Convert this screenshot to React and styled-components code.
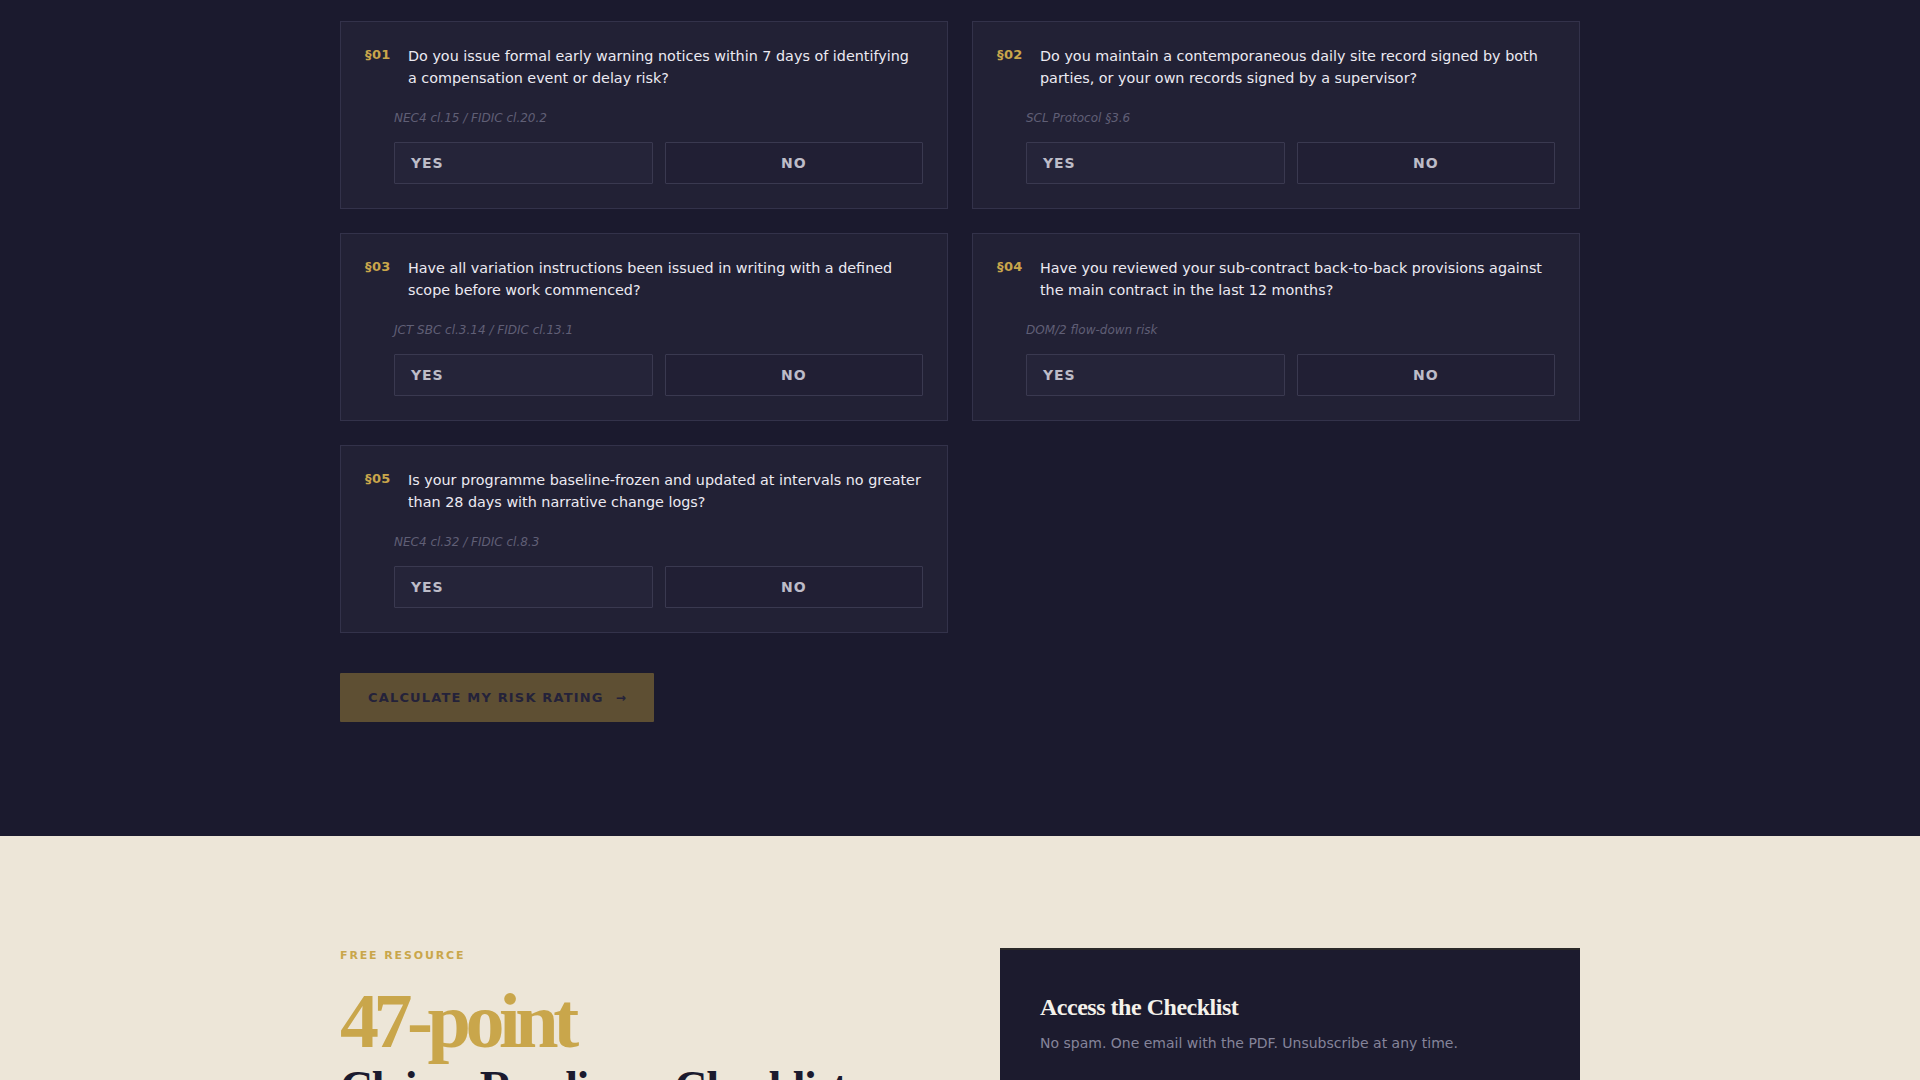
import React from 'react';
import styled, { createGlobalStyle } from 'styled-components';

const GlobalStyle = createGlobalStyle`
  html, body {
    margin: 0;
    padding: 0;
    background: #1b1a2e;
    font-family: "DejaVu Sans", "Noto Sans", sans-serif;
  }
  * {
    box-sizing: border-box;
  }
`;

const questions = [
  {
    id: '01',
    text: 'Do you issue formal early warning notices within 7 days of identifying a compensation event or delay risk?',
    cite: 'NEC4 cl.15 / FIDIC cl.20.2',
  },
  {
    id: '02',
    text: 'Do you maintain a contemporaneous daily site record signed by both parties, or your own records signed by a supervisor?',
    cite: 'SCL Protocol §3.6',
  },
  {
    id: '03',
    text: 'Have all variation instructions been issued in writing with a defined scope before work commenced?',
    cite: 'JCT SBC cl.3.14 / FIDIC cl.13.1',
  },
  {
    id: '04',
    text: 'Have you reviewed your sub-contract back-to-back provisions against the main contract in the last 12 months?',
    cite: 'DOM/2 flow-down risk',
  },
  {
    id: '05',
    text: 'Is your programme baseline-frozen and updated at intervals no greater than 28 days with narrative change logs?',
    cite: 'NEC4 cl.32 / FIDIC cl.8.3',
  },
];

// Dark assessment section
const AssessSection = styled.section`
  background: #1b1a2e;
  padding: 21px 0 114px;
`;

const Container = styled.div`
  width: 1240px;
  margin: 0 auto;
`;

const QuestionGrid = styled.div`
  display: grid;
  grid-template-columns: 1fr 1fr;
  gap: 24px;
`;

const Card = styled.div`
  background: #222135;
  border: 1px solid #33324a;
  padding: 23px 24px 24px;
  display: flex;
  flex-direction: column;
`;

const QuestionRow = styled.div`
  display: flex;
  align-items: flex-start;
  gap: 15px;
`;

const Number = styled.span`
  flex: 0 0 28px;
  font-size: 13px;
  font-weight: 700;
  letter-spacing: 0.03em;
  color: #c9a64b;
  line-height: 22px;
  margin-top: -1px;
`;

const QuestionText = styled.p`
  margin: 0;
  padding-right: 1px;
  font-size: 14.35px;
  line-height: 22px;
  color: #eceaf2;
`;

const Body = styled.div`
  padding-left: 29px;
`;

const Cite = styled.div`
  margin-top: 20px;
  font-size: 12px;
  line-height: 18px;
  font-style: italic;
  color: #605f76;
`;

const Answers = styled.div`
  margin-top: 15px;
  display: grid;
  grid-template-columns: 1fr 1fr;
  gap: 12px;
`;

const AnswerButton = styled.button`
  height: 42px;
  display: flex;
  align-items: center;
  justify-content: ${p => (p.$left ? 'flex-start' : 'center')};
  padding: 0 16px;
  background: ${p => (p.$left ? '#252439' : '#211f34')};
  border: 1px solid #3a3950;
  border-radius: 1px;
  font-family: inherit;
  font-size: 14px;
  font-weight: 700;
  letter-spacing: 0.06em;
  color: #bdbcc8;
  cursor: pointer;
`;

const CalcButton = styled.button`
  margin-top: 40px;
  height: 49px;
  padding: 0 28px;
  display: inline-flex;
  align-items: center;
  gap: 12px;
  background: #5e4f33;
  border: none;
  border-radius: 1px;
  font-family: inherit;
  font-size: 13px;
  font-weight: 700;
  letter-spacing: 0.09em;
  color: #24223a;
  cursor: not-allowed;
`;

const Arrow = styled.span`
  font-size: 12px;
  letter-spacing: 0;
`;

// Cream resource section
const ResourceSection = styled.section`
  background: #ede6d8;
  padding: 112px 0 80px;
`;

const ResourceGrid = styled.div`
  width: 1240px;
  margin: 0 auto;
  display: grid;
  grid-template-columns: 1fr 1fr;
  gap: 80px;
  align-items: start;
`;

const Eyebrow = styled.div`
  font-size: 11px;
  font-weight: 700;
  letter-spacing: 0.17em;
  color: #c9a64b;
  line-height: 16px;
`;

const Heading = styled.h2`
  margin: 16px 0 0;
  font-family: "Liberation Serif", "Times New Roman", serif;
  font-weight: 700;
  color: #1b1a2e;
`;

const BigNumber = styled.span`
  display: block;
  font-size: 78px;
  line-height: 1.05;
  letter-spacing: -0.07em;
  color: #c9a64b;
`;

const HeadingLine = styled.span`
  display: block;
  font-size: 46px;
  line-height: 1.15;
  letter-spacing: -0.03em;
`;

const FormCard = styled.div`
  background: #1c1b2e;
  border-top: 2px solid #2b2929;
  padding: 42px 40px 48px;
`;

const FormTitle = styled.h3`
  margin: 0;
  font-family: "Liberation Serif", "Times New Roman", serif;
  font-size: 24px;
  font-weight: 700;
  line-height: 31px;
  letter-spacing: -0.02em;
  color: #f4f1ea;
`;

const FormNote = styled.p`
  margin: 10px 0 0;
  font-size: 14px;
  line-height: 21px;
  color: #85849a;
`;

const FieldLabel = styled.div`
  margin-top: 32px;
  font-size: 11px;
  font-weight: 700;
  letter-spacing: 0.15em;
  color: #85849a;
`;

const QuestionCard = ({ q }) => (
  <Card>
    <QuestionRow>
      <Number>§{q.id}</Number>
      <QuestionText>{q.text}</QuestionText>
    </QuestionRow>
    <Body>
      <Cite>{q.cite}</Cite>
      <Answers>
        <AnswerButton $left>YES</AnswerButton>
        <AnswerButton>NO</AnswerButton>
      </Answers>
    </Body>
  </Card>
);

const App = () => (
  <>
    <GlobalStyle />
    <AssessSection>
      <Container>
        <QuestionGrid>
          {questions.map(q => (
            <QuestionCard key={q.id} q={q} />
          ))}
        </QuestionGrid>
        <CalcButton>
          CALCULATE MY RISK RATING <Arrow>→</Arrow>
        </CalcButton>
      </Container>
    </AssessSection>
    <ResourceSection>
      <ResourceGrid>
        <div>
          <Eyebrow>FREE RESOURCE</Eyebrow>
          <Heading>
            <BigNumber>47-point</BigNumber>
            <HeadingLine>Claims Readiness Checklist</HeadingLine>
          </Heading>
        </div>
        <FormCard>
          <FormTitle>Access the Checklist</FormTitle>
          <FormNote>No spam. One email with the PDF. Unsubscribe at any time.</FormNote>
          <FieldLabel>EMAIL ADDRESS</FieldLabel>
        </FormCard>
      </ResourceGrid>
    </ResourceSection>
  </>
);

export default App;
